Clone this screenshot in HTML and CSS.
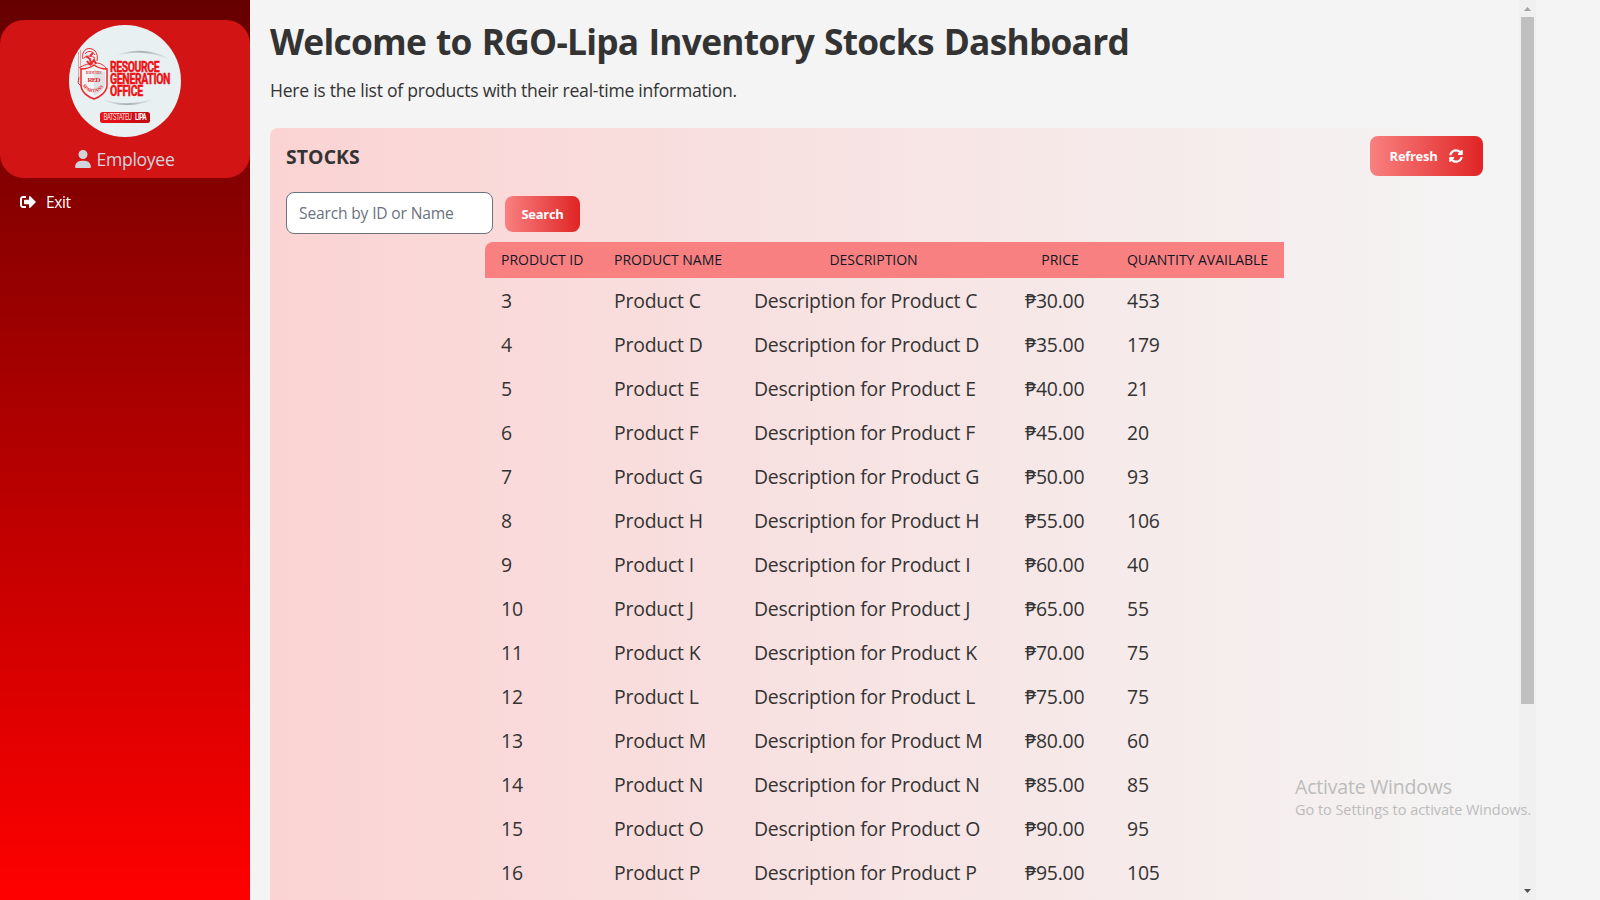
FILE: index.html
```
<!DOCTYPE html>
<html lang="en">
<head>
<meta charset="utf-8">
<title>RGO-Lipa Inventory</title>
<link rel="stylesheet" href="styles.css">
</head>
<body>
<div class="app">
  <aside class="sidebar">
    <div class="profile">
      <svg class="logo" viewBox="0 0 112 112" width="112" height="112">
        <defs>
          <linearGradient id="arc" x1="0" x2="1"><stop offset="0" stop-color="#e8f0f2"/><stop offset=".5" stop-color="#a9b0b1"/><stop offset="1" stop-color="#dde5e7"/></linearGradient>
          <linearGradient id="pill" x1="0" x2="1"><stop offset="0" stop-color="#ee1216"/><stop offset="1" stop-color="#c00c12"/></linearGradient>
        </defs>
        <circle cx="56" cy="56" r="56" fill="#e8f0f2"/>
        <path d="M45 31C60 24 84 23 101 35C84 26 62 26 45 31Z" fill="url(#arc)"/>
        <path d="M33 74C46 82 69 82 84 74C69 79 50 80 33 74Z" fill="url(#arc)"/>
        <g fill="none" stroke="#ec2a2e" stroke-width="1">
          <path d="M9.500 27v30M11.500 25v20" stroke-width=".6" opacity=".7"/>
          <path d="M14 34C12 26 18 22 23 24C28 26 29 31 28 36M16 29c3-4 8-3 10 1M15 33c4-3 8-2 11 0" />
          <path d="M17 31l4 3 1 5 3-4 2 4M18 36l3 4M24 28l-3 3" stroke-width="2"/>
          <path d="M10 43C15 40 20 38 24 39M27 38c4 0 8 2 11 6"/>
          <path d="M10 52l-1 6 3 3" />
        </g>
        <path d="M25 40C21 43 16 44 12 44V60C12 67 19 72 25 74C31 72 38 67 38 60V44C34 44 29 43 25 40Z" fill="#f3f4f5" stroke="#ed2529" stroke-width="1.500"/>
        <path d="M25 44V71C31 69 35 65 36 59V47C32 47 28 46 25 44Z" fill="#dfe3e5"/>
        <path id="ring" d="M13.500 60C17 70 32 70 37 58" fill="none"/>
        <text class="shield-top" x="17" y="49" textLength="16">BATSTATEU</text>
        <text class="shield-red" x="18.500" y="56.500" textLength="13">RED</text>
        <text class="shield-arc"><textPath href="#ring" textLength="26">SPARTANS</textPath></text>
        <text class="office" transform="translate(41 47.200) scale(.72 1)" textLength="69">RESOURCE</text>
        <text class="office" transform="translate(41 59) scale(.72 1)" textLength="84">GENERATION</text>
        <text class="office" transform="translate(41 70.700) scale(.72 1)" textLength="46">OFFICE</text>
        <rect x="31" y="87" width="50" height="11" rx="2.500" fill="url(#pill)"/>
        <text class="campus" transform="translate(34.500 95.200) scale(.75 1)" textLength="38">BATSTATEU</text>
        <text class="campus campus-bold" transform="translate(66 95.200) scale(.75 1)" textLength="15.500">LIPA</text>
      </svg>
      <div class="role">
        <svg viewBox="0 0 448 512" width="16" height="18"><path fill="currentColor" d="M224 256A128 128 0 1 0 224 0a128 128 0 1 0 0 256zm-45.700 48C79.800 304 0 383.800 0 482.300C0 498.700 13.300 512 29.700 512H418.300c16.400 0 29.700-13.300 29.700-29.700C448 383.800 368.200 304 269.700 304H178.300z"/></svg>
        <span>Employee</span>
      </div>
    </div>
    <a class="exit">
      <svg viewBox="0 0 512 512" width="16" height="16"><path fill="currentColor" d="M497 273L329 441c-15 15-41 4.500-41-17v-96H152c-13.300 0-24-10.700-24-24v-96c0-13.300 10.700-24 24-24h136V88c0-21.400 25.900-32 41-17l168 168c9.300 9.400 9.300 24.600 0 34zM192 436v-40c0-6.600-5.400-12-12-12H96c-17.700 0-32-14.300-32-32V160c0-17.700 14.300-32 32-32h84c6.600 0 12-5.400 12-12V76c0-6.600-5.400-12-12-12H96c-53 0-96 43-96 96v192c0 53 43 96 96 96h84c6.600 0 12-5.400 12-12z"/></svg>
      <span>Exit</span>
    </a>
  </aside>
  <main class="content">
    <h1 class="title"><span>Welcome to RGO-Lipa Inventory Stocks Dashboard</span></h1>
    <p class="intro"><span>Here is the list of products with their real-time information.</span></p>
    <section class="panel">
      <div class="panel-head">
        <h2 class="panel-title">STOCKS</h2>
        <button class="btn refresh"><span>Refresh</span>
          <svg viewBox="0 0 512 512" width="14" height="14"><path fill="currentColor" d="M370.720 133.280C339.458 104.008 298.888 87.962 255.848 88c-77.458.068-144.328 53.178-162.791 126.850-1.344 5.363-6.122 9.150-11.651 9.150H24.103c-7.498 0-13.194-6.807-11.807-14.176C33.933 94.924 134.813 8 256 8c66.448 0 126.791 26.136 171.315 68.685L463.030 40.970C478.149 25.851 504 36.559 504 57.941V192c0 13.255-10.745 24-24 24H345.941c-21.382 0-32.090-25.851-16.971-40.971l41.750-41.749zM32 296h134.059c21.382 0 32.090 25.851 16.971 40.971l-41.750 41.750c31.262 29.273 71.835 45.319 114.876 45.280 77.418-.070 144.315-53.144 162.787-126.849 1.344-5.363 6.122-9.150 11.651-9.150h57.304c7.498 0 13.194 6.807 11.807 14.176C478.067 417.076 377.187 504 256 504c-66.448 0-126.791-26.136-171.315-68.685L48.970 471.030C33.851 486.149 8 475.441 8 454.059V320c0-13.255 10.745-24 24-24z"/></svg>
        </button>
      </div>
      <div class="search">
        <input class="search-input" type="text" placeholder="Search by ID or Name">
        <button class="btn search-btn"><span>Search</span></button>
      </div>
      <table class="stocks">
        <colgroup><col class="c-id"><col class="c-name"><col class="c-desc"><col class="c-price"><col class="c-qty"></colgroup>
        <thead><tr><th>PRODUCT ID</th><th>PRODUCT NAME</th><th>DESCRIPTION</th><th>PRICE</th><th>QUANTITY AVAILABLE</th></tr></thead>
        <tbody>
          <tr><td>3</td><td>Product C</td><td>Description for Product C</td><td>₱30.00</td><td>453</td></tr>
          <tr><td>4</td><td>Product D</td><td>Description for Product D</td><td>₱35.00</td><td>179</td></tr>
          <tr><td>5</td><td>Product E</td><td>Description for Product E</td><td>₱40.00</td><td>21</td></tr>
          <tr><td>6</td><td>Product F</td><td>Description for Product F</td><td>₱45.00</td><td>20</td></tr>
          <tr><td>7</td><td>Product G</td><td>Description for Product G</td><td>₱50.00</td><td>93</td></tr>
          <tr><td>8</td><td>Product H</td><td>Description for Product H</td><td>₱55.00</td><td>106</td></tr>
          <tr><td>9</td><td>Product I</td><td>Description for Product I</td><td>₱60.00</td><td>40</td></tr>
          <tr><td>10</td><td>Product J</td><td>Description for Product J</td><td>₱65.00</td><td>55</td></tr>
          <tr><td>11</td><td>Product K</td><td>Description for Product K</td><td>₱70.00</td><td>75</td></tr>
          <tr><td>12</td><td>Product L</td><td>Description for Product L</td><td>₱75.00</td><td>75</td></tr>
          <tr><td>13</td><td>Product M</td><td>Description for Product M</td><td>₱80.00</td><td>60</td></tr>
          <tr><td>14</td><td>Product N</td><td>Description for Product N</td><td>₱85.00</td><td>85</td></tr>
          <tr><td>15</td><td>Product O</td><td>Description for Product O</td><td>₱90.00</td><td>95</td></tr>
          <tr><td>16</td><td>Product P</td><td>Description for Product P</td><td>₱95.00</td><td>105</td></tr>
        </tbody>
      </table>
    </section>
  </main>
  <div class="scrollbar">
    <svg class="arrow" viewBox="0 0 7 4" width="7" height="4"><path d="M0 4L3.500 0L7 4Z" fill="#a3a3a3"/></svg>
    <div class="track"><div class="thumb"></div></div>
    <svg class="arrow" viewBox="0 0 7 4" width="7" height="4"><path d="M0 0L3.500 4L7 0Z" fill="#505050"/></svg>
  </div>
  <div class="watermark">
    <div class="wm-title">Activate Windows</div>
    <div class="wm-text">Go to Settings to activate Windows.</div>
  </div>
</div>
</body>
</html>
```

FILE: styles.css
```
* { box-sizing: border-box; }
body {
  margin: 0;
  height: 900px;
  overflow: hidden;
  background: #f4f4f4;
  color: #333;
  font-family: "Segoe UI", "Open Sans", "Noto Sans", sans-serif;
}
.app { display: flex; height: 900px; position: relative; overflow: hidden; }

.sidebar {
  flex: 0 0 250px;
  padding-top: 20px;
  background: linear-gradient(#600, #f00);
}
.profile {
  height: 158px;
  padding-top: 5px;
  border-radius: 24px;
  background: #d31415;
  display: flex;
  flex-direction: column;
  align-items: center;
}
.logo { display: block; }
.role {
  display: flex;
  align-items: center;
  gap: 5px;
  margin-top: 8px;
  height: 28px;
  color: #d1d5db;
  font-size: 17.600px;
  letter-spacing: -.3px;
}
.exit {
  display: flex;
  align-items: center;
  gap: 10px;
  height: 48px;
  padding-left: 20px;
  color: #fff;
  font-size: 15.500px;
  letter-spacing: -.4px;
}
.office { font: 700 14.500px "Roboto", sans-serif; fill: #ee1014; stroke: #ee1014; stroke-width: .5px; }
.campus { font: 400 8.500px "Roboto", sans-serif; fill: #fbdcdc; }
.campus-bold { font-weight: 700; fill: #fff; }
.shield-top { font: 700 3px "Liberation Serif", serif; fill: #d8363a; }
.shield-red { font: 700 7px "Liberation Serif", serif; fill: #e3272b; }
.shield-arc { font: 700 5px "Liberation Serif", serif; fill: #e3272b; }

.content { flex: 0 0 1269px; padding: 0 20px; }
.title {
  margin: 0;
  padding-top: 17px;
  font-size: 35.300px;
  line-height: 48px;
  font-weight: 700;
  letter-spacing: -.75px;
  word-spacing: 1.600px;
  white-space: nowrap;
}
.intro {
  margin: 11px 0 0;
  font-size: 17.600px;
  line-height: 28px;
  letter-spacing: -.265px;
}
.panel {
  margin-top: 24px;
  height: 790px;
  padding: 8px 16px;
  border-radius: 8px;
  background: linear-gradient(90deg, #fbd3d3, #f4f4f4);
}
.panel-head { display: flex; justify-content: space-between; height: 56px; }
.panel-title { margin: 0; font-size: 19.400px; line-height: 42px; font-weight: 700; letter-spacing: .1px; }
.btn {
  border: 0;
  border-radius: 8px;
  background: linear-gradient(90deg, #f98080, #e02424);
  color: #fff;
  font-family: inherit;
  font-size: 13px;
  font-weight: 700;
  letter-spacing: -.3px;
  display: flex;
  align-items: center;
  justify-content: center;
}
.refresh { width: 113px; height: 40px; gap: 12px; }
.search { display: flex; align-items: center; gap: 12px; height: 42px; }
.search-input {
  width: 207px;
  height: 42px;
  padding: 0 12px;
  border: 1px solid #6b7280;
  border-radius: 8px;
  background: #fff;
  font-family: inherit;
  font-size: 15.600px;
  letter-spacing: -.17px;
}
.search-input::placeholder { color: #6b7280; }
.search-btn { width: 75px; height: 36px; margin-top: 2px; }
.stocks {
  width: 799px;
  margin: 8px 0 0 199px;
  table-layout: fixed;
  border-collapse: collapse;
}
.c-id { width: 113px; }
.c-name { width: 140px; }
.c-desc { width: 271px; }
.c-price { width: 102px; }
.c-qty { width: 173px; }
.stocks th {
  height: 36px;
  padding: 0 0 2px;
  background: #f98080;
  color: #111827;
  font-size: 14px;
  font-weight: 500;
  letter-spacing: -.02px;
  text-align: center;
  white-space: nowrap;
}
.stocks th:first-child { border-top-left-radius: 8px; }
.stocks th:nth-child(-n+2) { text-align: left; padding-left: 16px; }
.stocks td {
  height: 44px;
  padding: 0 0 0 16px;
  font-size: 19.400px;
  letter-spacing: -.2px;
  white-space: nowrap;
}

.scrollbar {
  flex: 0 0 17px;
  background: #f0f0f0;
  display: flex;
  flex-direction: column;
  align-items: center;
  padding: 7px 0;
}
.arrow { display: block; }
.track { flex: 1; padding-top: 6px; }
.thumb { width: 13px; height: 687px; background: #c0c0c0; }

.watermark { position: absolute; left: 1295px; top: 773px; color: #bcbcbc; white-space: nowrap; }
.wm-title { font-size: 19.500px; line-height: 28px; letter-spacing: -.2px; }
.wm-text { font-size: 14.500px; line-height: 18px; letter-spacing: -.04px; }
```
